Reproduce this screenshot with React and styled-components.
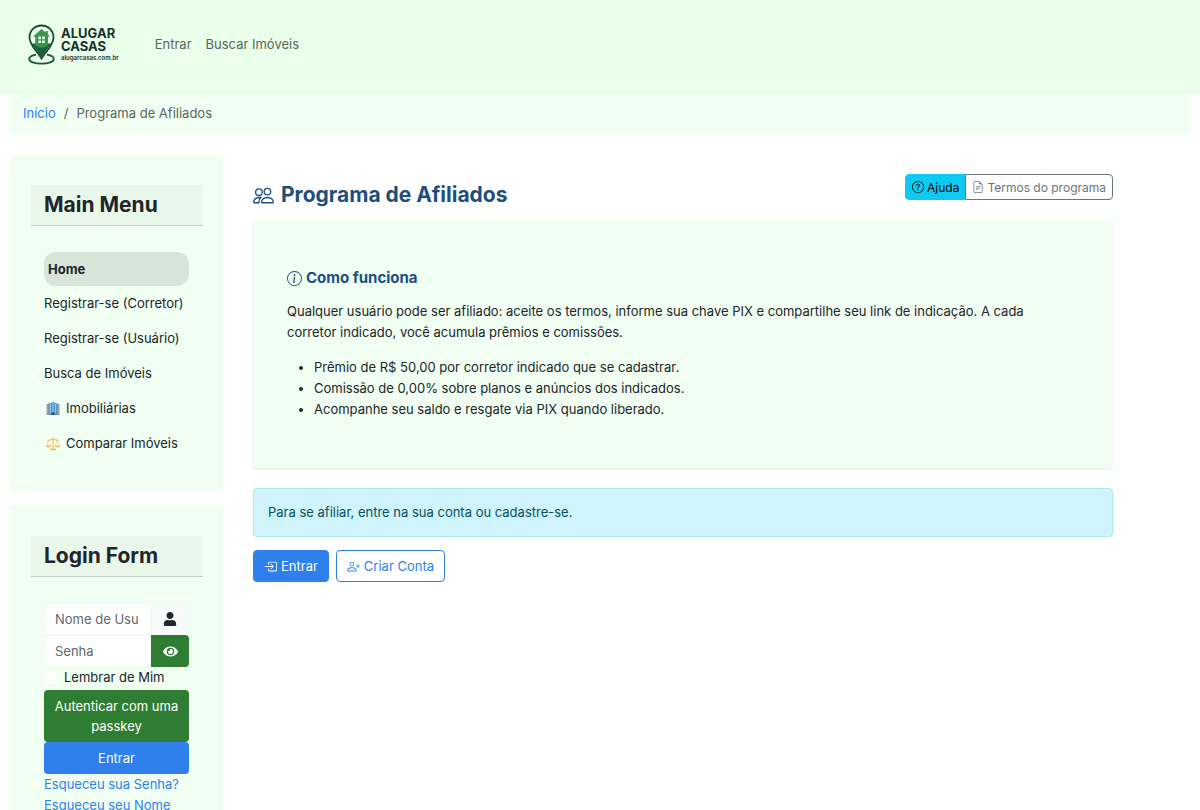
import React from 'react'
import styled, { createGlobalStyle, css } from 'styled-components'
import {
    BsPeople,
    BsInfoCircle,
    BsQuestionCircle,
    BsFileEarmarkText,
    BsBoxArrowInRight,
    BsPersonPlus
} from 'react-icons/bs'
import { FaUser, FaEye } from 'react-icons/fa'

const Mint = '#f0fff2'
const Blue = '#2f80ed'
const Green = '#2e7d32'
const Navy = '#1d4e7e'
const Ink = '#212529'

const menuItems = [
    { label: 'Home', active: true },
    { label: 'Registrar-se (Corretor)' },
    { label: 'Registrar-se (Usuário)' },
    { label: 'Busca de Imóveis' },
    { label: 'Imobiliárias', icon: <BuildingIcon /> },
    { label: 'Comparar Imóveis', icon: <ScalesIcon /> }
]

const benefits = [
    'Prêmio de R$ 50,00 por corretor indicado que se cadastrar.',
    'Comissão de 0,00% sobre planos e anúncios dos indicados.',
    'Acompanhe seu saldo e resgate via PIX quando liberado.'
]

export default function App() {
    return (
        <>
            <GlobalStyle />
            <Header>
                <Brand href="#" aria-label="Alugar Casas">
                    <PinLogo />
                    <BrandText>
                        <BrandName>ALUGAR<br />CASAS</BrandName>
                        <BrandSite>alugarcasas.com.br</BrandSite>
                    </BrandText>
                </Brand>
                <Nav>
                    <NavLink href="#">Entrar</NavLink>
                    <NavLink href="#">Buscar Imóveis</NavLink>
                </Nav>
            </Header>
            <Page>
                <Breadcrumb aria-label="Breadcrumb">
                    <a href="#">Início</a>
                    <span>/</span>
                    <span>Programa de Afiliados</span>
                </Breadcrumb>
                <Columns>
                    <Sidebar>
                        <SideCard>
                            <SideTitle>Main Menu</SideTitle>
                            <Menu>
                                {menuItems.map((item) => (
                                    <li key={item.label}>
                                        <MenuLink href="#" $active={item.active}>
                                            {item.icon}
                                            {item.label}
                                        </MenuLink>
                                    </li>
                                ))}
                            </Menu>
                        </SideCard>
                        <SideCard>
                            <SideTitle>Login Form</SideTitle>
                            <LoginForm />
                        </SideCard>
                    </Sidebar>
                    <Main>
                        <TitleRow>
                            <PageTitle><BsPeople />Programa de Afiliados</PageTitle>
                            <ButtonGroup>
                                <HelpButton type="button"><BsQuestionCircle />Ajuda</HelpButton>
                                <TermsButton type="button"><BsFileEarmarkText />Termos do programa</TermsButton>
                            </ButtonGroup>
                        </TitleRow>
                        <InfoCard>
                            <InfoTitle><BsInfoCircle />Como funciona</InfoTitle>
                            <InfoText>
                                Qualquer usuário pode ser afiliado: aceite os termos, informe sua chave PIX e
                                compartilhe seu link de indicação. A cada corretor indicado, você acumula prêmios e
                                comissões.
                            </InfoText>
                            <InfoList>
                                {benefits.map((text) => <li key={text}>{text}</li>)}
                            </InfoList>
                        </InfoCard>
                        <Alert>Para se afiliar, entre na sua conta ou cadastre-se.</Alert>
                        <Actions>
                            <ActionLink href="#" $filled><BsBoxArrowInRight />Entrar</ActionLink>
                            <ActionLink href="#"><BsPersonPlus />Criar Conta</ActionLink>
                        </Actions>
                    </Main>
                </Columns>
            </Page>
        </>
    )
}

function LoginForm() {
    return (
        <Form onSubmit={(e) => e.preventDefault()}>
            <InputGroup>
                <TextInput type="text" placeholder="Nome de Usuário" aria-label="Nome de Usuário" />
                <InputIcon><FaUser /></InputIcon>
            </InputGroup>
            <InputGroup>
                <TextInput type="password" placeholder="Senha" aria-label="Senha" />
                <EyeButton type="button" aria-label="Mostrar senha"><FaEye /></EyeButton>
            </InputGroup>
            <Remember htmlFor="remember">
                <input type="checkbox" id="remember" />
                Lembrar de Mim
            </Remember>
            <FormButton type="button" $color={Green}>Autenticar com uma passkey</FormButton>
            <FormButton type="submit" $color={Blue}>Entrar</FormButton>
            <FormLink href="#">Esqueceu sua Senha?</FormLink>
            <FormLink href="#">Esqueceu seu Nome de Usuário?</FormLink>
        </Form>
    )
}

function PinLogo() {
    return (
        <svg width="28" height="42" viewBox="0 0 28 42" fill="none">
            <path d="M8 30.6C3.6 31.400 1.200 32.900 1.200 34.900C1.200 37.700 6.500 39.600 13.500 39.600S25.800 37.700 25.800 34.900C25.800 32.900 23.400 31.400 19 30.600" stroke="#17583a" strokeWidth="1.800" />
            <path d="M13.500 1.500C6.800 1.500 1.500 6.800 1.500 13.400C1.500 21 8.500 26.500 13.500 34.500C18.500 26.500 25.500 21 25.500 13.400C25.500 6.800 20.200 1.500 13.500 1.500Z" fill="#e9fdea" stroke="#164a35" strokeWidth="1.800" />
            <path d="M3.500 19.500C6.500 24 10.500 27.500 13.500 35.500C16.500 27.500 20.500 24 23.500 19.500Z" fill="#17633a" />
            <path d="M13.500 5L5 12.500H7.200V21C11 24.500 16 24.500 20 21V12.500H22.200L19.800 10.300V7H17.600V8.400Z" fill="#3b9350" />
            <path d="M10.300 12.600h2.700v2.700h-2.700zM14.100 12.600h2.700v2.700h-2.700zM10.300 16.400h2.700v2.700h-2.700zM14.100 16.400h2.700v2.700h-2.700z" fill="#e9fdea" />
        </svg>
    )
}

function BuildingIcon() {
    return (
        <svg width="16" height="16" viewBox="0 0 16 16">
            <path d="M1.500 3.500L5 2V14H1.500Z" fill="#8d93ad" />
            <path d="M11 2L14.500 3.500V14H11Z" fill="#8b8ba3" />
            <path d="M4 2.500L8 1L12 2.500V14H4Z" fill="#5b9bd0" />
            <path d="M5.500 2.800V12M8 2V11M10.500 2.800V12" stroke="#8cc7ee" strokeWidth="1" />
            <path d="M2.700 4V13M13.300 4V13" stroke="#b2a9bd" strokeWidth="0.800" />
            <path d="M6.500 11.500H9.500V14H6.500Z" fill="#354265" />
        </svg>
    )
}

function ScalesIcon() {
    return (
        <svg width="16" height="16" viewBox="0 0 16 16" fill="none" stroke="#f3bd69">
            <path d="M8 1.500V13M2.500 4.500C5 4.500 6 3 8 3S11 4.500 13.500 4.500" strokeWidth="1.200" />
            <path d="M3.500 4.500L1.500 9.500M3.500 4.500L5.800 9.500M12.500 4.500L10.200 9.500M12.500 4.500L14.500 9.500" strokeWidth="0.500" />
            <path d="M1 9.500H6C6 12 1 12 1 9.500ZM10 9.500H15C15 12 10 12 10 9.500Z" fill="#f8cd85" strokeWidth="0.600" />
            <path d="M5 13.500H11" strokeWidth="1.800" />
        </svg>
    )
}

const GlobalStyle = createGlobalStyle`
    * {
        box-sizing: border-box;
    }
    body {
        margin: 0;
        background: #fff;
        color: ${Ink};
        font-family: Inter, 'Liberation Sans', sans-serif;
        font-size: 13px;
        line-height: 21px;
    }
    a {
        color: ${Blue};
        text-decoration: none;
    }
    button, input {
        font: inherit;
    }
    svg {
        flex: none;
    }
`

const Header = styled.header`
    display: flex;
    align-items: center;
    gap: 36px;
    height: 94px;
    padding: 0 28px 5px;
    background: #eaffea;
    box-shadow: 0 1px 3px rgba(0, 0, 0, 0.06);
`
const Brand = styled.a`
    display: flex;
    align-items: center;
    gap: 5px;
    color: #16332b;
`
const BrandText = styled.span`
    display: flex;
    flex-direction: column;
`
const BrandName = styled.span`
    font-size: 13px;
    font-weight: 700;
    line-height: 13px;
`
const BrandSite = styled.span`
    font-size: 6px;
    font-weight: 600;
    line-height: 9px;
`
const Nav = styled.nav`
    display: flex;
    gap: 14px;
`
const NavLink = styled.a`
    color: #59665a;
`

const Page = styled.div`
    padding: 0 10px;
`
const Breadcrumb = styled.nav`
    display: flex;
    gap: 8px;
    padding: 9px 13px 10px;
    background: ${Mint};
    color: #59665a;
`
const Columns = styled.div`
    display: flex;
    align-items: flex-start;
    gap: 30px;
    margin-top: 21px;
`

const Sidebar = styled.aside`
    display: flex;
    flex-direction: column;
    flex: none;
    gap: 14px;
    width: 213px;
`
const SideCard = styled.section`
    padding: 30px 20px 29px 21px;
    background: ${Mint};
    border-radius: 3px;
`
const SideTitle = styled.h3`
    margin: 0 0 26px;
    padding: 6px 13px;
    background: #e8f7ea;
    border-bottom: 1px solid #c3d1c5;
    font-size: 21px;
    font-weight: 700;
    line-height: 28px;
`
const Menu = styled.ul`
    margin: 0;
    padding: 0 14px 2px 13px;
    list-style: none;
`
const MenuLink = styled.a`
    display: flex;
    align-items: center;
    gap: 5px;
    height: 35px;
    color: ${Ink};
    white-space: nowrap;

    svg {
        margin-left: 1px;
    }

    ${(props) => props.$active && css`
        height: 34px;
        padding: 0 4px;
        background: #d7e4d8;
        border-radius: 12px;
        font-weight: 700;
    `}
`

const Form = styled.form`
    display: flex;
    flex-direction: column;
    padding: 0 14px 0 13px;
`
const InputGroup = styled.div`
    display: flex;
    height: 32px;
`
const TextInput = styled.input`
    flex: 1;
    min-width: 0;
    padding: 0 12px 0 10px;
    background: #fff;
    border: 1px solid #f1fbf2;
    border-radius: 4px 0 0 4px;
    color: ${Ink};

    &::placeholder {
        color: #62686d;
        opacity: 1;
    }
`
const InputIcon = styled.span`
    display: flex;
    align-items: center;
    justify-content: center;
    width: 38px;
    background: #f8f9fa;
    border: 1px solid #f1fbf2;
    border-radius: 0 4px 4px 0;
    font-size: 14px;
`
const EyeButton = styled.button`
    display: flex;
    align-items: center;
    justify-content: center;
    width: 38px;
    padding: 0;
    background: ${Green};
    border: none;
    border-radius: 0 4px 4px 0;
    color: #fff;
    font-size: 15px;
`
const Remember = styled.label`
    display: flex;
    align-items: center;
    gap: 8px;
    margin-bottom: 2px;

    input {
        appearance: none;
        width: 12px;
        height: 12px;
        margin: 0;
        background: #fff;
        border-radius: 3px;
    }
`
const FormButton = styled.button`
    padding: 6px 8px;
    background: ${(props) => props.$color};
    border: none;
    border-radius: 4px;
    color: #fff;
    line-height: 20px;
`
const FormLink = styled.a`
    line-height: 21px;
`

const Main = styled.main`
    flex: 1;
    min-width: 0;
    max-width: 860px;
    padding-top: 19px;
`
const TitleRow = styled.div`
    display: flex;
    justify-content: space-between;
    align-items: flex-start;
    height: 46px;
`
const PageTitle = styled.h1`
    display: flex;
    align-items: center;
    gap: 7px;
    margin: 0;
    padding-top: 7px;
    color: ${Navy};
    font-size: 21px;
    font-weight: 700;
    line-height: 28px;
`
const ButtonGroup = styled.div`
    display: flex;
`
const SmallButton = styled.button`
    display: flex;
    align-items: center;
    gap: 3px;
    height: 26px;
    padding: 0 6px;
    border: 1px solid;
    font-size: 12px;
    white-space: nowrap;
`
const HelpButton = styled(SmallButton)`
    padding-right: 5px;
    background: #0dcaf0;
    border-color: #0dcaf0;
    border-radius: 4px 0 0 4px;
    color: #000;
`
const TermsButton = styled(SmallButton)`
    background: #fff;
    border-color: #6c757d;
    border-radius: 0 4px 4px 0;
    color: #6c757d;
`

const InfoCard = styled.section`
    padding: 47px 48px 48px 34px;
    background: ${Mint};
    border-radius: 4px;
    box-shadow: 0 1px 3px rgba(0, 0, 0, 0.1);
`
const InfoTitle = styled.h2`
    display: flex;
    align-items: center;
    gap: 4px;
    margin: 0 0 12px;
    color: ${Navy};
    font-size: 15px;
    font-weight: 700;
    line-height: 22px;
`
const InfoText = styled.p`
    margin: 0 0 14px;
`
const InfoList = styled.ul`
    margin: 0;
    padding-left: 27px;
`
const Alert = styled.div`
    margin: 20px 0 13px;
    padding: 13px 14px;
    background: #cff4fc;
    border: 1px solid #b1e6ee;
    border-radius: 4px;
    color: #055160;
`
const Actions = styled.div`
    display: flex;
    gap: 7px;
`
const ActionLink = styled.a`
    display: flex;
    align-items: center;
    gap: 4px;
    height: 32px;
    padding: 0 10px;
    background: ${(props) => (props.$filled ? Blue : '#fff')};
    border: 1px solid ${Blue};
    border-radius: 4px;
    color: ${(props) => (props.$filled ? '#fff' : Blue)};
`
